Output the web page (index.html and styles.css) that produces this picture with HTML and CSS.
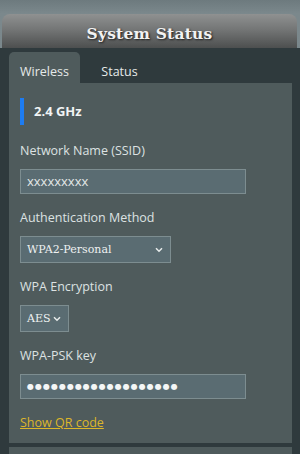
FILE: index.html
```html
<html lang="en">
 <head>
  <meta charset="UTF-8">
  <meta name="viewport" content="width=device-width, initial-scale=1.0">
  <title>System Status</title>
  <link rel="stylesheet" href="styles.css">
 </head>
 <body>
  <div class="panel">
   <div class="panel-header">
    <h1>System Status</h1>
   </div>
   <div class="panel-body">
    <div class="tabs">
     <div class="tab active">Wireless</div>
     <div class="tab">Status</div>
    </div>
    <div class="tab-content">
     <div class="band-title">2.4 GHz</div>

     <div class="field">
      <div class="field-label">Network Name (SSID)</div>
      <div class="text-input">xxxxxxxxx</div>
     </div>

     <div class="field">
      <div class="field-label">Authentication Method</div>
      <div class="select select-auth">
       <span>WPA2-Personal</span>
       <svg class="chevron" width="8" height="6" viewBox="0 0 8 6"><path d="M1 1.2 L4 4.2 L7 1.2" fill="none" stroke="#e8ecec" stroke-width="1.5"/></svg>
      </div>
     </div>

     <div class="field">
      <div class="field-label">WPA Encryption</div>
      <div class="select select-enc">
       <span>AES</span>
       <svg class="chevron" width="8" height="6" viewBox="0 0 8 6"><path d="M1 1.2 L4 4.2 L7 1.2" fill="none" stroke="#e8ecec" stroke-width="1.5"/></svg>
      </div>
     </div>

     <div class="field">
      <div class="field-label">WPA-PSK key</div>
      <div class="text-input password">●●●●●●●●●●●●●●●●●●●</div>
     </div>

     <a href="#" class="qr-link">Show QR code</a>
    </div>
    <div class="next-section"></div>
   </div>
  </div>
 </body>
</html>
```

FILE: styles.css
```css
* {
    margin: 0;
    padding: 0;
    box-sizing: border-box;
    font-family: 'Open Sans', 'Noto Sans', sans-serif;
}

body {
    background: linear-gradient(180deg, #6d7a7e 0%, #7b888c 3%, #74848a 100%);
    height: 454px;
    overflow: hidden;
}

.panel {
    margin: 14px 0 0 2px;
}

.panel-header {
    height: 34px;
    width: 295px;
    border-radius: 8px 8px 0 0;
    background: linear-gradient(180deg, #8f9191 0%, #747676 45%, #4d4f4f 100%);
    display: flex;
    align-items: center;
    justify-content: center;
}

.panel-header h1 {
    font-family: 'DejaVu Serif', serif;
    font-size: 15.5px;
    font-weight: bold;
    color: #f2f2f2;
    letter-spacing: 0.2px;
    text-shadow: 1px 1px 2px #1c1c1c;
    margin-top: 5px;
}

.panel-body {
    background: #2f3a3d;
    margin-left: -2px;
    padding: 4px 8px 0 9px;
    height: 420px;
}

.tabs {
    display: flex;
    height: 31px;
}

.tab {
    width: 71px;
    font-size: 12.5px;
    color: #e6eaea;
    display: flex;
    align-items: center;
    justify-content: center;
    padding-top: 7px;
    border-radius: 5px 5px 0 0;
}

.tab + .tab {
    margin-left: 4px;
}

.tab.active {
    background: #4f5b5c;
}

.tab-content {
    background: #4f5b5c;
    width: 283px;
    height: 360px;
    padding: 15px 11px 0;
}

.band-title {
    border-left: 4px solid #1d7cf2;
    padding-left: 10px;
    height: 27px;
    line-height: 27px;
    font-size: 13px;
    font-weight: bold;
    color: #f1f4f4;
    margin-bottom: 16px;
}

.field {
    margin-bottom: 14px;
}

.field-label {
    font-size: 12.5px;
    color: #dde2e2;
    height: 20px;
    line-height: 20px;
    margin-bottom: 8px;
}

.text-input {
    width: 226px;
    height: 25px;
    background: #5a6c72;
    border: 1px solid #7d8d90;
    color: #e4e8e8;
    font-size: 13px;
    line-height: 23px;
    padding-left: 6px;
}

.password {
    font-family: 'DejaVu Sans', sans-serif;
    font-size: 8px;
    letter-spacing: 1px;
    color: #f4f6f6;
}

.select {
    height: 27px;
    background: #5a6c72;
    border: 1px solid #7d8d90;
    display: flex;
    align-items: center;
    justify-content: space-between;
    padding: 0 7px 0 6px;
    color: #eef1f1;
}

.select span {
    font-family: 'DejaVu Serif', serif;
    font-size: 11px;
}

.select-auth {
    width: 151px;
}

.select-enc {
    width: 49px;
}

.qr-link {
    display: inline-block;
    margin-top: 1px;
    font-size: 12.5px;
    color: #dcb62a;
    text-decoration: underline;
}

.next-section {
    margin-top: 4px;
    width: 283px;
    height: 20px;
    background: #4f5b5c;
}
```
